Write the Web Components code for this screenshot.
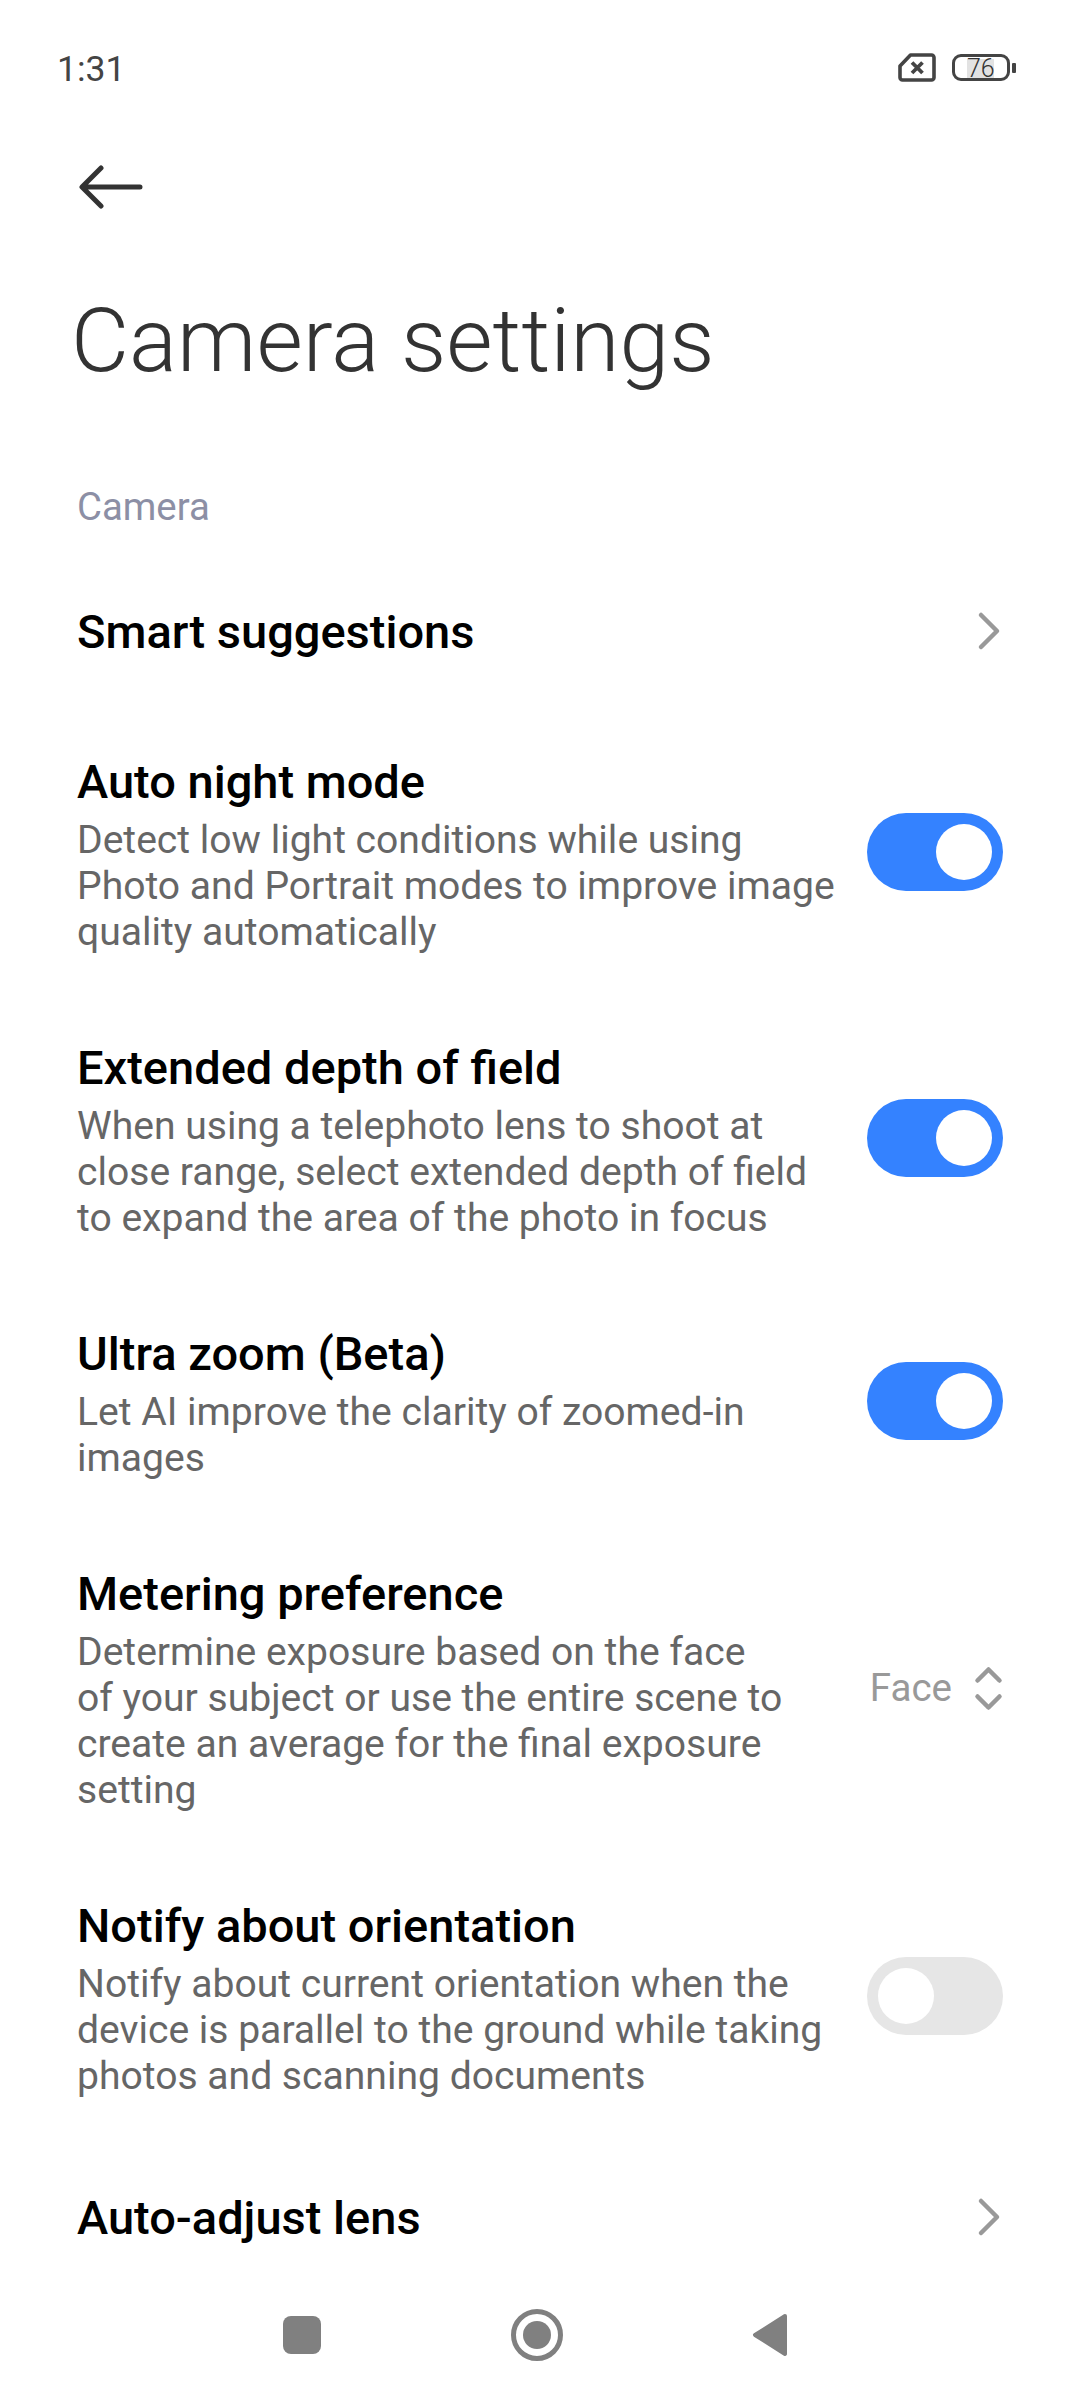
<!DOCTYPE html>
<html>
<head>
<meta charset="utf-8">
<title>Camera settings</title>
<style>
  html,body{margin:0;padding:0;background:#fff;}
  body{width:1080px;height:2400px;font-family:Roboto,"Noto Sans",sans-serif;overflow:hidden;}
  settings-page{height:2400px;}
</style>
</head>
<body>
<settings-page>
  <status-bar slot="top" time="1:31" level="76"></status-bar>
  <page-header slot="top">Camera settings</page-header>
  <section-label>Camera</section-label>
  <setting-row control="link" style="padding-top:44px;padding-bottom:41px"><span slot="title">Smart suggestions</span></setting-row>
  <setting-row control="on">
    <span slot="title">Auto night mode</span>
    Detect low light conditions while using<br>Photo and Portrait modes to improve image<br>quality automatically
  </setting-row>
  <setting-row control="on">
    <span slot="title">Extended depth of field</span>
    When using a telephoto lens to shoot at<br>close range, select extended depth of field<br>to expand the area of the photo in focus
  </setting-row>
  <setting-row control="on">
    <span slot="title">Ultra zoom (Beta)</span>
    Let AI improve the clarity of zoomed-in<br>images
  </setting-row>
  <setting-row control="select" value="Face">
    <span slot="title">Metering preference</span>
    Determine exposure based on the face<br>of your subject or use the entire scene to<br>create an average for the final exposure<br>setting
  </setting-row>
  <setting-row control="off">
    <span slot="title">Notify about orientation</span>
    Notify about current orientation when the<br>device is parallel to the ground while taking<br>photos and scanning documents
  </setting-row>
  <setting-row control="link" style="padding-top:45px"><span slot="title">Auto-adjust lens</span></setting-row>
  <nav-buttons slot="bottom"></nav-buttons>
</settings-page>

<script>
class SettingsPage extends HTMLElement {
  constructor() {
    super();
    this.attachShadow({mode: 'open'}).innerHTML = `
      <style>
        :host{display:flex;flex-direction:column;width:1080px;background:#fff;overflow:hidden;}
        .list{flex:1;min-height:0;overflow:hidden;display:flex;flex-direction:column;}
      </style>
      <slot name="top"></slot>
      <div class="list"><slot></slot></div>
      <slot name="bottom"></slot>`;
  }
}

class StatusBar extends HTMLElement {
  constructor() {
    super();
    this.attachShadow({mode: 'open'}).innerHTML = `
      <style>
        :host{display:flex;align-items:center;justify-content:space-between;height:68px;padding:35px 62px 0 57px;box-sizing:content-box;color:#444;}
        .time{font-size:35.500px;line-height:40px;}
        .right{display:flex;align-items:center;gap:16px;margin-bottom:4px;}
        .batt{position:relative;width:66px;height:27px;display:block;}
        .batt svg{position:absolute;left:0;top:0;}
        .num{position:absolute;left:15px;top:5px;width:27px;height:19px;background:#e2e2e2;font-size:25px;line-height:20px;font-weight:300;text-align:center;color:#333;}
        svg{display:block;}
      </style>
      <span class="time"></span>
      <span class="right">
        <svg width="38" height="29" viewBox="0 0 38 29" fill="none" stroke="#444">
          <path d="M12.500 2H33.500a2.500 2.500 0 0 1 2.500 2.500V24.500a2.500 2.500 0 0 1-2.500 2.500H4.500a2.500 2.500 0 0 1-2.500-2.500V13Z" stroke-width="3.600" stroke-linejoin="round"/>
          <path d="M14 9.500 24.500 20M24.500 9.500 14 20" stroke-width="3.800"/>
        </svg>
        <span class="batt">
          <span class="num"></span>
          <svg width="66" height="27" viewBox="0 0 66 27" fill="none">
            <rect x="1.500" y="1.500" width="55" height="24" rx="7.500" stroke="#444" stroke-width="3"/>
            <rect x="60" y="9" width="4" height="10" rx="1" fill="#444"/>
          </svg>
        </span>
      </span>`;
    this.shadowRoot.querySelector('.time').textContent = this.getAttribute('time');
    this.shadowRoot.querySelector('.num').textContent = this.getAttribute('level');
  }
}

class PageHeader extends HTMLElement {
  constructor() {
    super();
    this.attachShadow({mode: 'open'}).innerHTML = `
      <style>
        :host{display:block;padding:0 0 0 71px;}
        .back{height:92px;margin-top:38px;display:flex;align-items:center;}
        .back svg{margin-left:8px;display:block;}
        h1{margin:0;padding-top:50px;font-size:89.500px;line-height:116px;font-weight:300;color:#333;}
      </style>
      <div class="back">
        <svg width="64" height="44" viewBox="0 0 64 44" fill="none" stroke="#333" stroke-width="5" stroke-linecap="round" stroke-linejoin="round">
          <path d="M61 22H4M22 3 3 22 22 41"/>
        </svg>
      </div>
      <h1><slot></slot></h1>`;
  }
}

class SectionLabel extends HTMLElement {
  constructor() {
    super();
    this.attachShadow({mode: 'open'}).innerHTML = `
      <style>
        :host{display:block;padding:84px 77px 22px;font-size:38.300px;line-height:48px;color:#8c8fa5;}
      </style>
      <slot></slot>`;
  }
}

const chevron = `<svg width="26" height="42" viewBox="0 0 26 42" fill="none" stroke="#999" stroke-width="4.500" stroke-linecap="round" stroke-linejoin="round"><path d="M4 5 20 21 4 37"/></svg>`;
const updown = `<svg width="30" height="48" viewBox="0 0 30 48" fill="none" stroke="#999" stroke-width="4.500" stroke-linecap="round" stroke-linejoin="round"><path d="M4.500 17.500 15.500 6.500 26.500 17.500M4.500 33.500 15.500 44.500 26.500 33.500"/></svg>`;

class SettingRow extends HTMLElement {
  constructor() {
    super();
    const type = this.getAttribute('control');
    let control = '';
    if (type === 'link') control = `<span class="icon link">${chevron}</span>`;
    if (type === 'select') control = `<span class="val">${this.getAttribute('value')}</span><span class="icon">${updown}</span>`;
    if (type === 'on' || type === 'off') control = `<toggle-switch ${type === 'on' ? 'checked' : ''}></toggle-switch>`;
    this.attachShadow({mode: 'open'}).innerHTML = `
      <style>
        :host{display:flex;align-items:center;justify-content:space-between;padding:39px 77px;flex:none;}
        .text{display:flex;flex-direction:column;min-width:0;}
        .title{font-size:47px;line-height:70px;font-weight:500;color:#000;}
        .desc{font-size:39.100px;line-height:46px;color:#666;white-space:nowrap;}
        .ctl{display:flex;align-items:center;flex:none;margin-top:2px;}
        .val{font-size:38.500px;color:#999;margin-right:21px;}
        .icon{display:block;}
        .icon svg{display:block;}
        .link{margin-bottom:5px;}
      </style>
      <div class="text">
        <div class="title"><slot name="title"></slot></div>
        <div class="desc"><slot></slot></div>
      </div>
      <div class="ctl">${control}</div>`;
  }
}

class ToggleSwitch extends HTMLElement {
  constructor() {
    super();
    this.attachShadow({mode: 'open'}).innerHTML = `
      <style>
        :host{display:flex;width:136px;height:78px;box-sizing:border-box;padding:11px;border-radius:39px;background:#e6e6e6;}
        :host([checked]){background:#3482ff;justify-content:flex-end;}
        i{display:block;width:56px;height:56px;border-radius:50%;background:#fff;}
      </style>
      <i></i>`;
  }
}

class NavButtons extends HTMLElement {
  constructor() {
    super();
    this.attachShadow({mode: 'open'}).innerHTML = `
      <style>
        :host{display:flex;align-items:center;justify-content:space-between;height:130px;padding:0 292px 0 283px;box-sizing:border-box;}
        svg{display:block;}
      </style>
      <svg width="38" height="38" viewBox="0 0 38 38"><rect width="38" height="38" rx="8" fill="#808080"/></svg>
      <svg width="52" height="52" viewBox="0 0 52 52" fill="none"><circle cx="26" cy="26" r="23.500" stroke="#808080" stroke-width="5"/><circle cx="26" cy="26" r="14" fill="#808080"/></svg>
      <svg width="36" height="44" viewBox="0 0 36 44"><path d="M33 3 3 22 33 41Z" fill="#808080" stroke="#808080" stroke-width="4" stroke-linejoin="round"/></svg>`;
  }
}

customElements.define('settings-page', SettingsPage);
customElements.define('status-bar', StatusBar);
customElements.define('page-header', PageHeader);
customElements.define('section-label', SectionLabel);
customElements.define('setting-row', SettingRow);
customElements.define('toggle-switch', ToggleSwitch);
customElements.define('nav-buttons', NavButtons);
</script>
</body>
</html>
